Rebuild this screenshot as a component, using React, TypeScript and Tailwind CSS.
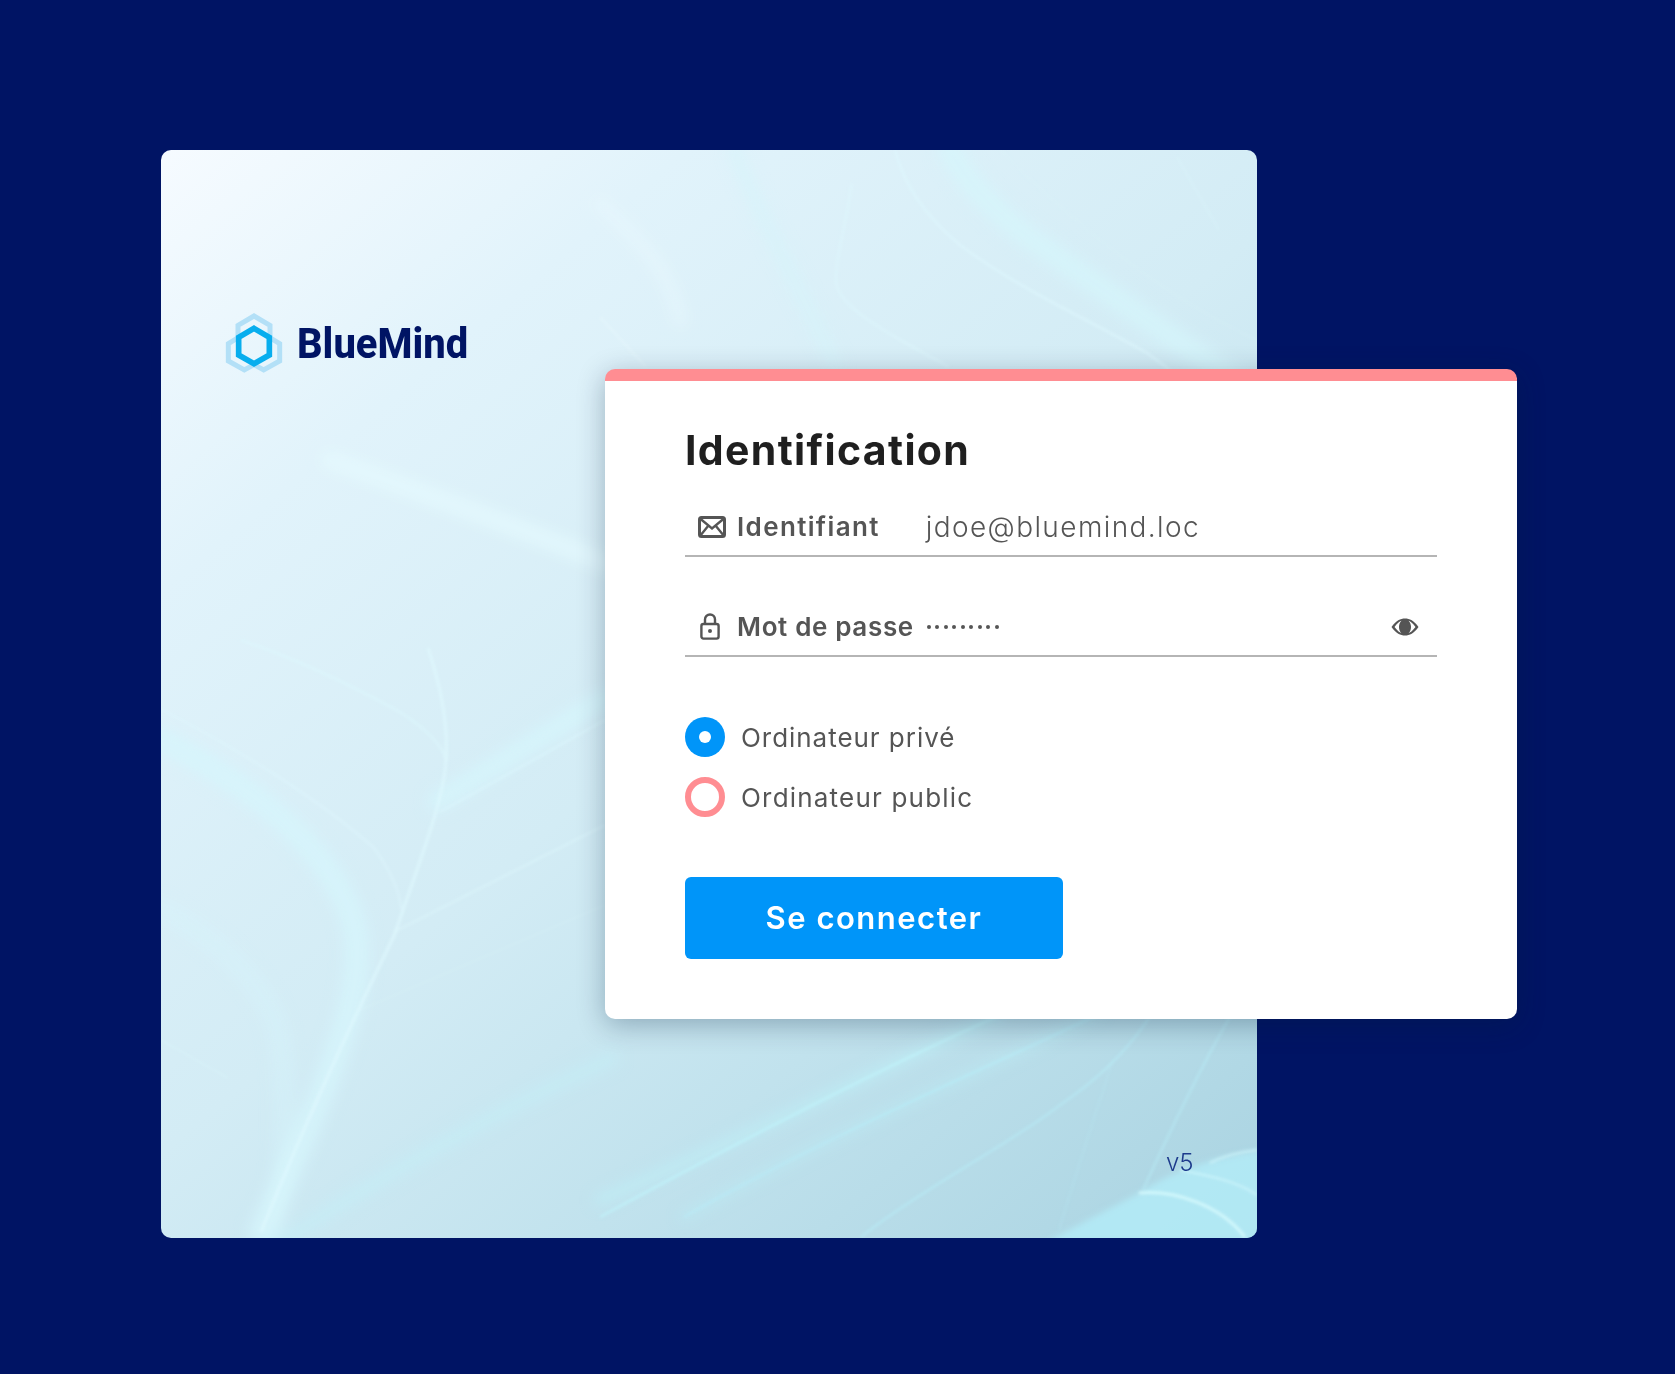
import React from "react";

const font = { fontFamily: "Inter, 'Open Sans', sans-serif" };

function Waves() {
  return (
    <svg className="absolute inset-0 h-full w-full" viewBox="161 150 1096 1088" preserveAspectRatio="none" fill="none">
      <defs>
        <filter id="b1" x="-30%" y="-30%" width="160%" height="160%"><feGaussianBlur stdDeviation="7" /></filter>
        <filter id="b2" x="-30%" y="-30%" width="160%" height="160%"><feGaussianBlur stdDeviation="1.6" /></filter>
        <filter id="b3" x="-30%" y="-30%" width="160%" height="160%"><feGaussianBlur stdDeviation="3" /></filter>
      </defs>
      <g filter="url(#b1)" stroke="#d6f6fc" strokeLinecap="round">
        <path d="M161 740 C240 780 310 830 345 900 C375 960 350 1040 261 1232" strokeWidth="26" opacity="0.75" />
        <path d="M161 909 C220 940 265 985 278 1030 C290 1100 285 1180 272 1238" strokeWidth="22" opacity="0.35" />
        <path d="M438 801 L605 698" strokeWidth="22" opacity="0.75" />
        <path d="M330 460 C400 485 500 520 611 565" strokeWidth="20" stroke="#e6fbff" opacity="0.6" />
        <path d="M949 150 C975 195 1010 225 1040 245 C1090 280 1160 330 1257 395" strokeWidth="26" opacity="0.65" />
        <path d="M735 150 C750 195 790 270 836 367" strokeWidth="16" opacity="0.5" />
        <path d="M600 1200 C760 1130 900 1060 1000 1015" strokeWidth="12" stroke="#bdeef7" opacity="0.7" />
        <path d="M270 1250 C390 1170 500 1110 611 1059" strokeWidth="18" stroke="#c3eff8" opacity="0.45" />
        <path d="M684 1217 C820 1140 960 1080 1097 1015" strokeWidth="8" stroke="#bdeef7" opacity="0.6" />
        <path d="M600 204 C640 240 670 270 680 320" strokeWidth="16" stroke="#eafbff" opacity="0.4" />
      </g>
      <g filter="url(#b2)" stroke="#dff9fe" fill="none">
        <path d="M428 648 C442 690 448 730 446 760 C444 800 420 860 394 936 C370 985 310 1110 261 1232" strokeWidth="3" opacity="0.7" />
        <path d="M241 640 C300 660 360 690 400 712 C425 728 442 745 446 760" strokeWidth="2.5" opacity="0.55" />
        <path d="M161 709 C240 750 320 800 374 848 C390 870 400 890 401 909" strokeWidth="2.5" opacity="0.45" />
        <path d="M394 932 L605 825" strokeWidth="2" opacity="0.5" />
        <path d="M440 812 L605 720" strokeWidth="2" opacity="0.65" />
        <path d="M161 1040 L228 1078" strokeWidth="1.5" opacity="0.3" />
        <path d="M360 1010 L605 905" strokeWidth="1.5" opacity="0.2" />
        <path d="M600 1217 C760 1130 900 1060 1000 1015" strokeWidth="2.5" stroke="#c0f1f9" opacity="0.85" />
        <path d="M684 1217 C820 1140 960 1080 1097 1015" strokeWidth="2" stroke="#b8eef8" opacity="0.7" />
        <path d="M861 1237 C920 1190 1021 1137 1060 1105 C1090 1085 1125 1055 1151 1015" strokeWidth="2" stroke="#b8eef8" opacity="0.7" />
        <path d="M1059 1230 C1080 1160 1100 1100 1113 1060" strokeWidth="1.5" stroke="#b8eef8" opacity="0.3" />
        <path d="M1143 1190 C1175 1120 1205 1060 1231 1015" strokeWidth="2" stroke="#b8eef8" opacity="0.65" />
        <path d="M895 150 C905 190 930 220 960 245 C1020 290 1090 320 1147 353 L1170 370" strokeWidth="2.5" opacity="0.6" />
        <path d="M852 183 C845 230 835 260 836 283 C840 310 900 340 949 367" strokeWidth="2.5" opacity="0.5" />
        <path d="M1177 157 L1219 230" strokeWidth="2" opacity="0.3" />
        <path d="M600 317 L646 367" strokeWidth="2" stroke="#eafbff" opacity="0.4" />
        <path d="M1000 150 C1080 230 1170 300 1257 340" strokeWidth="1.5" opacity="0.25" />
      </g>
      <g filter="url(#b3)">
        <path d="M1046 1242 L1139 1193 C1170 1172 1210 1158 1262 1150 L1262 1242 Z" fill="#b3ecf7" opacity="0.8" />
      </g>
      <g filter="url(#b2)" stroke="#d6f9fd" fill="none">
        <path d="M1139 1193 C1175 1190 1220 1205 1245 1237" strokeWidth="3" opacity="0.9" />
        <path d="M1180 1170 C1205 1175 1235 1180 1257 1195" strokeWidth="2" opacity="0.7" />
        <path d="M1210 1163 C1225 1155 1240 1152 1257 1150" strokeWidth="2" opacity="0.7" />
      </g>
    </svg>
  );
}

function Logo() {
  return (
    <svg className="h-[80px] w-[80px] shrink-0" viewBox="0 0 240 240" fill="none">
      <g stroke="#b3e0f7" strokeWidth="15" strokeLinejoin="miter">
        <path d="M69 95 L69 61 L117 33 L165 61 L165 95" />
        <path d="M66 100 L40 116 L40 168 L88 195 L117 179" />
        <path d="M168 100 L194 116 L194 168 L146 195 L117 179" />
      </g>
      <path d="M117 70 L163 97 L163 150 L117 176 L71 150 L71 97 Z" stroke="#08aeee" strokeWidth="17" />
    </svg>
  );
}

function MailIcon() {
  return (
    <svg className="h-[22px] w-[28px]" viewBox="0 0 28 22" fill="none" stroke="#555555" strokeWidth="3">
      <rect x="1.5" y="1.5" width="25" height="19" rx="2" />
      <path d="M2 2.5 L14 12.5 L26 2.5 M2 20 L10.5 9.5 M26 20 L17.5 9.5" strokeWidth="2.4" />
    </svg>
  );
}

function LockIcon() {
  return (
    <svg className="h-[27px] w-[20px]" viewBox="0 0 20 27" fill="none" stroke="#555555" strokeWidth="2.4">
      <rect x="1.4" y="11" width="17.2" height="14.6" rx="2" />
      <path d="M5 11 V6.5 a5 5 0 0 1 10 0 V11" />
      <circle cx="10" cy="18" r="2" fill="#555555" stroke="none" />
    </svg>
  );
}

function EyeIcon() {
  return (
    <svg className="h-[18px] w-[28px]" viewBox="0 0 28 18">
      <path fillRule="evenodd" fill="#555555" d="M0.5 9 C5 2.5 9.5 0.5 14 0.5 C18.5 0.5 23 2.5 27.5 9 C23 15.5 18.5 17.5 14 17.5 C9.5 17.5 5 15.5 0.5 9 Z M3.5 9 C6.5 13 9 14.8 10.5 15.2 C8.8 13.8 8 11.5 8 9 C8 6.5 8.8 4.2 10.5 2.8 C9 3.2 6.5 5 3.5 9 Z M24.5 9 C21.5 5 19 3.2 17.5 2.8 C19.2 4.2 20 6.5 20 9 C20 11.5 19.2 13.8 17.5 15.2 C19 14.8 21.5 13 24.5 9 Z" />
      <circle cx="14" cy="9" r="5.4" fill="#555555" />
    </svg>
  );
}

export default function App() {
  return (
    <div className="flex h-[1374px] w-full bg-[#001464] pl-[161px] pt-[150px]" style={font}>
      <div className="relative h-[1088px] w-[1096px] rounded-[10px] bg-[linear-gradient(140deg,#f6fbff_0%,#e1f3fb_22%,#d3ecf5_50%,#c1e2ed_72%,#a9d3e1_100%)]">
        <div className="absolute inset-0 overflow-hidden rounded-[10px]">
          <Waves />
        </div>

        <div className="relative flex items-center pl-[54px] pt-[155px]">
          <Logo />
          <span className="ml-[2px] mt-[-3px] origin-left scale-x-[0.95] text-[42px] font-extrabold leading-[48px] text-[#001464]" style={{ fontFamily: "Roboto, sans-serif" }}>
            BlueMind
          </span>
        </div>

        <span className="absolute left-[1005px] top-[999px] text-[24px] font-light leading-[28px] text-[#1c3a8c]">v5</span>

        <div className="absolute left-[444px] top-[219px] flex h-[650px] w-[912px] flex-col rounded-[10px] border-t-[12px] border-[#ff8d92] bg-white px-[80px] shadow-[0_6px_28px_rgba(0,30,60,0.3)]">
          <h1 className="mt-[45px] text-[41px] font-bold leading-[48px] tracking-[1.35px] text-[#1f1f1f]">Identification</h1>

          <div className="mt-[24px] flex h-[59px] items-center border-b-2 border-[#b5b5b5] pl-[13px]">
            <MailIcon />
            <span className="ml-[11px] text-[26px] font-semibold tracking-[1.36px] text-[#555555]">Identifiant</span>
            <span className="ml-[46px] text-[28px] font-light tracking-[1.4px] text-[#555555]">jdoe@bluemind.loc</span>
          </div>

          <div className="mt-[41px] flex h-[59px] items-center border-b-2 border-[#b5b5b5] pl-[15px] pr-[18px]">
            <LockIcon />
            <span className="ml-[17px] text-[26px] font-semibold tracking-[0.65px] text-[#555555]">Mot de passe</span>
            <span className="ml-[13px] flex gap-[4.5px]">
              {Array.from({ length: 9 }).map((_, i) => (
                <span key={i} className="h-[4px] w-[4px] rounded-full bg-[#555555]" />
              ))}
            </span>
            <span className="ml-auto flex">
              <EyeIcon />
            </span>
          </div>

          <div className="mt-[60px] flex items-center">
            <span className="flex h-[40px] w-[40px] items-center justify-center rounded-full bg-[#0095f9]">
              <span className="h-[12px] w-[12px] rounded-full bg-white" />
            </span>
            <span className="ml-[16px] text-[26px] font-normal tracking-[0.96px] text-[#555555]">Ordinateur privé</span>
          </div>
          <div className="mt-[20px] flex items-center">
            <span className="h-[40px] w-[40px] rounded-full border-[6px] border-[#ff8d92]" />
            <span className="ml-[16px] text-[26px] font-normal tracking-[1.2px] text-[#555555]">Ordinateur public</span>
          </div>

          <button className="mt-[60px] h-[82px] w-[378px] rounded-[6px] bg-[#0095f9] text-[31px] font-semibold tracking-[1.5px] text-white">
            Se connecter
          </button>
        </div>
      </div>
    </div>
  );
}
